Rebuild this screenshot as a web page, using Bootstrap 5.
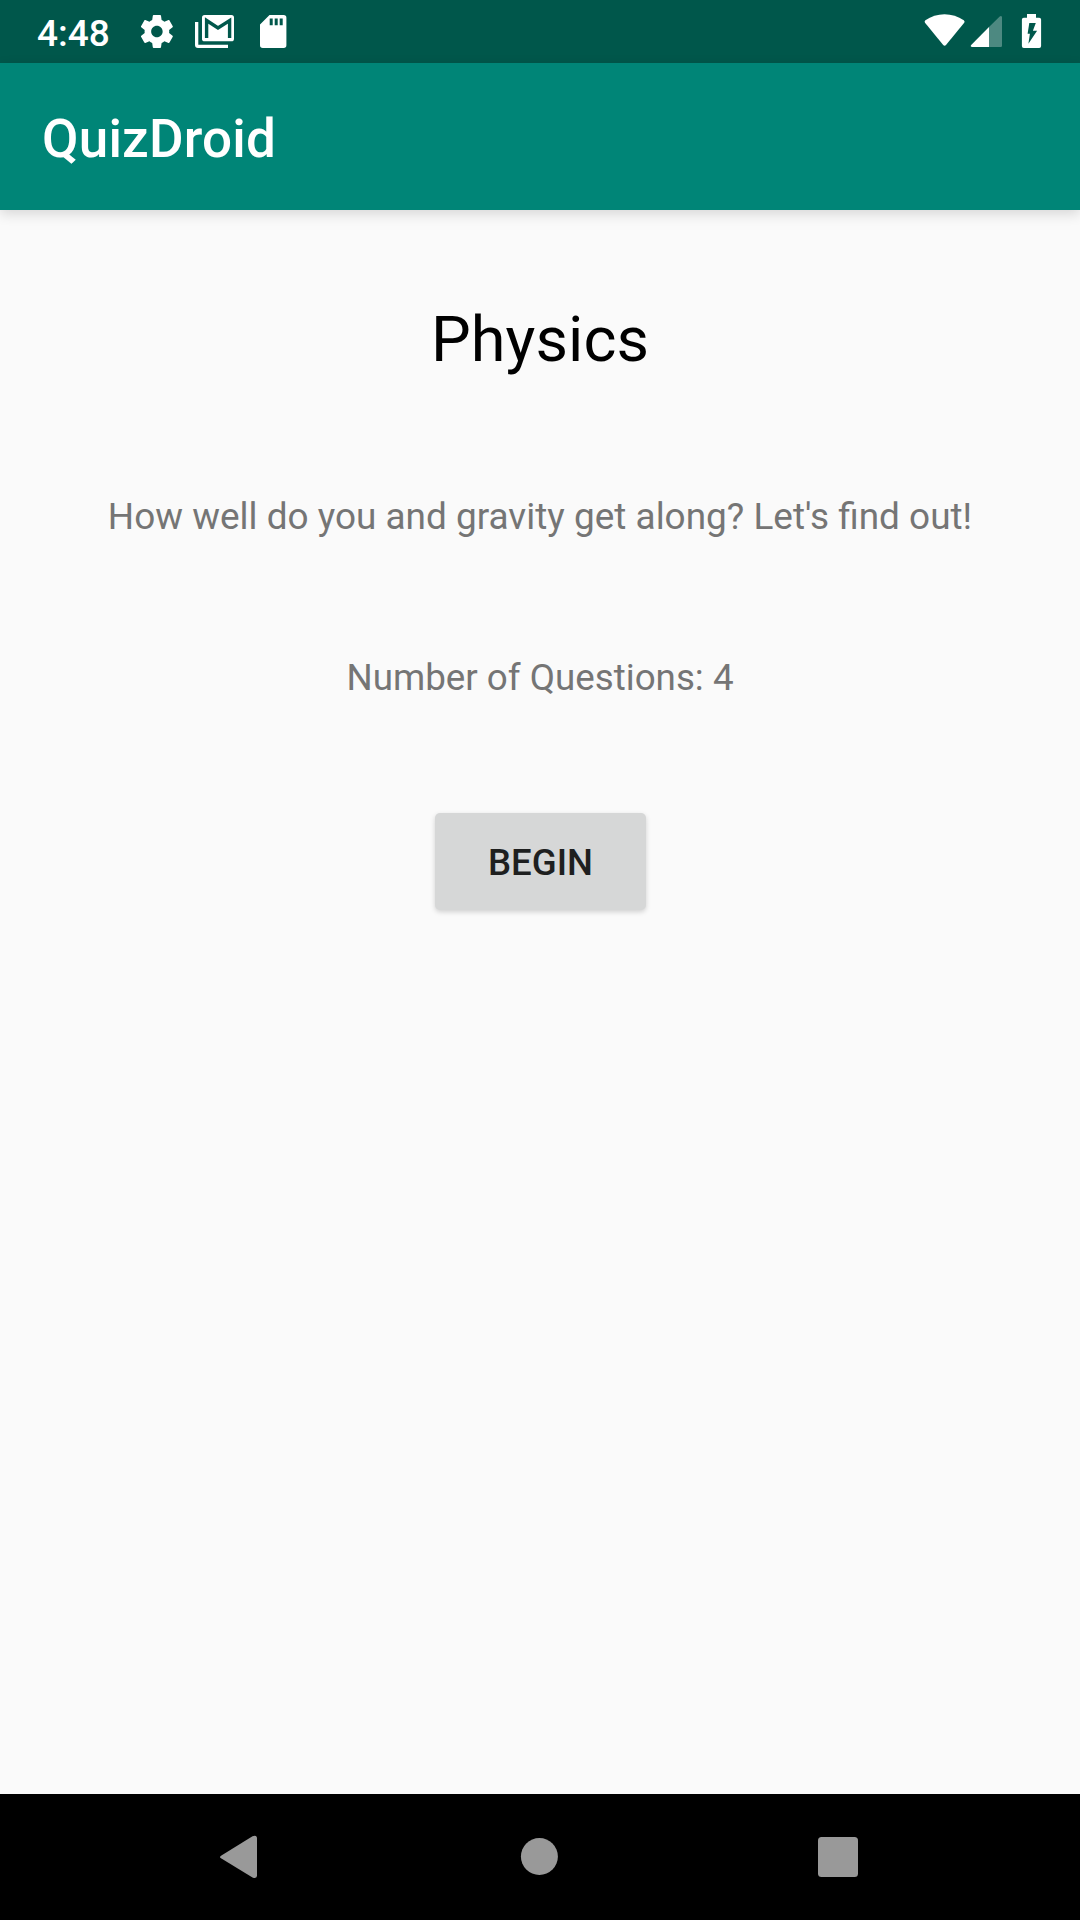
<!DOCTYPE html>
<html lang="en">
<head>
<meta charset="utf-8">
<meta name="viewport" content="width=device-width, initial-scale=1">
<title>QuizDroid</title>
<link href="https://cdn.jsdelivr.net/npm/bootstrap@5.3.0/dist/css/bootstrap.min.css" rel="stylesheet">
<style>
  body { font-family: Roboto, "Liberation Sans", sans-serif; background: #fafafa; font-size: 36.75px; line-height: 43px; }
  .status-bar { height: 63px; background: #00574b; padding-left: 37px; padding-right: 38px; }
  .clock { font-weight: 500; font-size: 37px; line-height: 59px; padding-top: 4px; width: 100px; }
  .status-bar svg { display: block; flex: none; }
  .app-bar { height: 147px; background: #008577; padding: 4px 42px 0; box-shadow: 0 4px 12px rgba(0,0,0,.14); }
  .app-bar .navbar-brand { font-size: 53px; letter-spacing: .2px; font-weight: 500; line-height: 62px; }
  .topic { padding-top: 93px; color: #757575; }
  .topic h1 { font-size: 63px; letter-spacing: .08px; font-weight: 400; line-height: 74px; color: #000; }
  .topic p { margin-top: 118px; }
  .topic .tagline { font-size: 36.95px; }
  .btn-begin { margin-top: 114px; width: 211px; height: 96.500px; padding: 2px 0 0 1px; border: 0; border-radius: 5px; font-size: 36.6px; line-height: 43px; font-weight: 500; color: #1e1f1f; background: #d6d7d7; box-shadow: 0 2px 5px rgba(0,0,0,.17); }
  .system-nav { height: 126px; background: #000; padding-left: 219px; padding-right: 222px; }
</style>
</head>
<body>
<div class="d-flex flex-column vh-100 overflow-hidden">
  <div class="status-bar d-flex justify-content-between text-white">
    <div class="d-flex">
      <div class="clock">4:48</div>
      <svg width="154" height="63" viewBox="137 0 154 63" fill="#fff" aria-hidden="true">
        <path transform="translate(137.2 11.8) scale(1.642)" d="M19.43 12.98c.04-.32.07-.64.07-.98s-.03-.66-.07-.98l2.11-1.65c.19-.15.24-.42.12-.64l-2-3.46c-.12-.22-.39-.3-.61-.22l-2.49 1c-.52-.4-1.08-.73-1.69-.98l-.38-2.65C14.46 2.18 14.25 2 14 2h-4c-.25 0-.46.18-.49.42l-.38 2.65c-.61.25-1.17.59-1.69.98l-2.49-1c-.23-.09-.49 0-.61.22l-2 3.46c-.13.22-.07.49.12.64l2.11 1.65c-.04.32-.07.65-.07.98s.03.66.07.98l-2.11 1.65c-.19.15-.24.42-.12.64l2 3.46c.12.22.39.3.61.22l2.49-1c.52.4 1.08.73 1.69.98l.38 2.65c.03.24.24.42.49.42h4c.25 0 .46-.18.49-.42l.38-2.65c.61-.25 1.17-.59 1.69-.98l2.49 1c.23.09.49 0 .61-.22l2-3.46c.12-.22.07-.49-.12-.64l-2.11-1.65zM12 15.5c-1.93 0-3.5-1.57-3.5-3.5s1.57-3.5 3.5-3.5 3.5 1.57 3.5 3.5-1.57 3.5-3.5 3.5z"/>
        <path d="M195 22h3.300v22.700H228V48H198a3 3 0 0 1-3-3z"/>
        <rect x="202" y="15" width="32" height="26.300" rx="2.600"/>
        <path d="M206.600 38V20.500L218 28L229.600 20.500V38" fill="none" stroke="#00574b" stroke-width="3.400"/>
        <path d="M269.500 15h14.100a2.800 2.800 0 0 1 2.800 2.800v27.400a2.800 2.800 0 0 1-2.800 2.800h-20.800a2.800 2.800 0 0 1-2.800-2.800V24.500z"/>
        <path d="M269.700 18.500h3v6.700h-3zM274.700 18.500h3v6.700h-3zM279.700 18.500h3v6.700h-3z" fill="#00574b"/>
      </svg>
    </div>
    <svg width="120" height="63" viewBox="922 0 120 63" fill="#fff" aria-hidden="true">
      <path d="M925 22.800Q924 21.400 925.400 20.200C936.500 12.100 952.500 12.100 963.800 20.200Q965.200 21.400 964.200 22.800L946 45Q944.600 46.600 943.200 45z"/>
      <path d="M1002 17.200V45.800A1.200 1.200 0 0 1 1000.800 47H989V27.100L999.700 16.400Q1001.600 15.200 1002 17.200z" opacity=".3"/>
      <path d="M989 27.100V47H972.200Q969.800 46.500 971.200 44.900z"/>
      <path d="M1027 14h9v3.700h3.200a1.900 1.900 0 0 1 1.900 1.900v26.500a1.900 1.900 0 0 1-1.900 1.900h-15.400a1.900 1.900 0 0 1-1.900-1.900V19.600a1.900 1.900 0 0 1 1.900-1.900h3.200z"/>
      <path d="M1029.300 23h6.500l-2.900 7.700h4.200l-8.700 13 1.500-10h-2.300z" fill="#00574b"/>
    </svg>
  </div>
  <nav class="app-bar navbar">
    <span class="navbar-brand text-white m-0 p-0">QuizDroid</span>
  </nav>
  <main class="topic flex-grow-1 d-flex flex-column align-items-center text-center">
    <h1 class="m-0">Physics</h1>
    <p class="tagline mb-0">How well do you and gravity get along? Let's find out!</p>
    <p class="mb-0">Number of Questions: 4</p>
    <button type="button" class="btn btn-begin text-uppercase">Begin</button>
  </main>
  <div class="system-nav d-flex justify-content-between align-items-center">
    <svg width="40" height="44" viewBox="0 0 40 44" fill="#999" aria-hidden="true"><path d="M2 20.700L33.500 1.300Q38 -.3 38 3.500V40.500Q38 44 33.500 42.400L2 23.300Q0 22 2 20.700z"/></svg>
    <svg width="39" height="38" viewBox="0 0 39 38" fill="#999" aria-hidden="true"><circle cx="20.400" cy="18.500" r="18.500"/></svg>
    <svg width="40" height="40" viewBox="0 0 40 40" fill="#999" aria-hidden="true"><rect width="40" height="40" rx="3.500"/></svg>
  </div>
</div>
<script src="https://cdn.jsdelivr.net/npm/bootstrap@5.3.0/dist/js/bootstrap.bundle.min.js"></script>
</body>
</html>
